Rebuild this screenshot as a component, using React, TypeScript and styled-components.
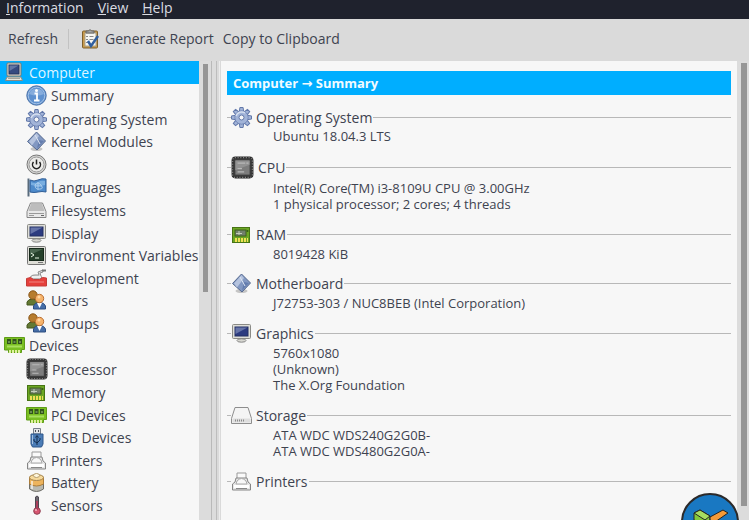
import React from "react";
import styled, { createGlobalStyle, css } from "styled-components";

const GlobalStyle = createGlobalStyle`
  * { box-sizing: border-box; }
  html, body { margin: 0; height: 100%; overflow: hidden; }
  body, button, a { font-family: "Open Sans", "DejaVu Sans", sans-serif; font-size: 14px; }
  body { background: #dadada; color: #3e4350; }
`;

const Window = styled.div`
  position: relative;
  display: flex;
  flex-direction: column;
  height: 100vh;
  overflow: hidden;
`;

const MenuBar = styled.nav`
  display: flex;
  align-items: center;
  gap: 14px;
  height: 19px;
  flex: none;
  padding: 0 6px 3px;
  background: #1f222d;
`;

const MenuButton = styled.button`
  border: 0;
  padding: 0;
  background: none;
  color: #dadce2;
  line-height: 16px;
  &::first-letter { text-decoration: underline; }
`;

const Toolbar = styled.div`
  display: flex;
  align-items: center;
  height: 41px;
  flex: none;
  padding: 0 8px 2px;
  background: #dadada;
`;

const ToolButton = styled.button`
  display: flex;
  align-items: center;
  gap: 4px;
  border: 0;
  padding: 0;
  margin-right: 9px;
  background: none;
  color: #3e4350;
  white-space: nowrap;
`;

const Divider = styled.span`
  width: 1px;
  height: 20px;
  margin: 0 12px 0 1px;
  background: #c2c2c2;
`;

const Panes = styled.div`
  display: flex;
  flex: 1;
  min-height: 0;
  padding-top: 1px;
`;

const Tree = styled.ul`
  flex: none;
  width: 199px;
  margin: 0;
  padding: 0;
  list-style: none;
  overflow: hidden;
  background: #f7f7f7;
`;

const TreeLink = styled.a<{ $height: number; $top?: boolean; $selected?: boolean }>`
  display: flex;
  align-items: center;
  gap: 4px;
  height: ${(p) => p.$height}px;
  padding-left: ${(p) => (p.$top ? 4 : 26)}px;
  padding-bottom: 1px;
  color: #3e4350;
  text-decoration: none;
  white-space: nowrap;
  ${(p) =>
    p.$selected &&
    css`
      background: #00aeff;
      color: #dff5ff;
    `}
`;

const Trough = styled.div<{ $edge?: boolean }>`
  flex: none;
  width: 12px;
  padding: ${(p) => (p.$edge ? "2px 2px 0 4px" : "3px 3px 0 4px")};
  background: #dcdcdc;
`;

const Thumb = styled.div<{ $share: number }>`
  height: ${(p) => p.$share}%;
  background: #969696;
`;

const Splitter = styled.div`
  flex: none;
  width: 9px;
  margin-right: 1px;
  border-left: 1px solid #b9b9b9;
  border-right: 1px solid #ececec;
  background: linear-gradient(90deg, #dcdcdc 4px, #bdbdbd 4px 5px, #dadada 5px);
`;

const Detail = styled.main`
  flex: 1;
  min-width: 0;
  padding: 10px 6px 0;
  background: #f7f7f7;
`;

const Heading = styled.h1`
  margin: 0 0 13px;
  padding-left: 6px;
  background: #00aeff;
  color: #f2fbff;
  font-size: 13px;
  font-weight: 700;
  line-height: 24px;
`;

const Section = styled.section`
  margin-bottom: 12px;
`;

const SectionTitle = styled.h2<{ $height: number }>`
  display: flex;
  align-items: center;
  gap: 4px;
  height: ${(p) => p.$height}px;
  margin: 0;
  padding-bottom: 2px;
  font-size: 14px;
  font-weight: 400;
  white-space: nowrap;
  &::before {
    content: "";
    width: 4px;
    height: 1px;
    margin-right: -4px;
    background: #b8b8b8;
  }
  &::after {
    content: "";
    flex: 1;
    height: 1px;
    margin-left: -3px;
    background: #b8b8b8;
  }
`;

const Line = styled.p`
  margin: 0;
  padding-left: 46px;
  font-size: 13px;
  line-height: 16px;
  color: #3e4350;
`;

const Badge = styled.div`
  position: absolute;
  right: 10px;
  bottom: -31px;
`;

const Icon = styled.svg`
  display: block;
  flex: none;
  overflow: visible;
`;

type IconName =
  | "computer" | "info" | "gear" | "diamond" | "power" | "flag" | "drive" | "disk" | "display"
  | "terminal" | "knife" | "users" | "card" | "chip" | "memory" | "usb" | "printer"
  | "battery" | "sensor";

const gearTeeth = [0, 45, 90, 135, 180, 225, 270, 315];

const drawings: Record<IconName, React.ReactNode> = {
  computer: (
    <>
      <rect x="3" y="1" width="14" height="13" rx="1" fill="#e4e3d8" stroke="#77776f" />
      <rect x="5" y="3" width="10" height="9" fill="#354a80" stroke="#26335a" />
      <path d="M5.500 3.500h9L5.500 9z" fill="#6377a6" />
      <path d="M3 15h14l1.500 3.500h-17z" fill="#e6e5dc" stroke="#8b8b82" />
      <path d="M4 16.500h12" stroke="#a5a59c" />
    </>
  ),
  info: (
    <>
      <circle cx="10.500" cy="10.500" r="9.700" fill="#5f91cf" stroke="#4a72a8" />
      <circle cx="10.500" cy="10.500" r="8.300" fill="none" stroke="#a5c2e6" />
      <path d="M3 9a8 8 0 0 1 15 0q-7 3-15 0" fill="#86acdc" />
      <circle cx="10.500" cy="5.500" r="1.500" fill="#fff" />
      <path d="M8.500 8.500h2.500v6.500M8 15.500h5.500" fill="none" stroke="#fff" strokeWidth="1.800" />
    </>
  ),
  gear: (
    <>
      {gearTeeth.map((a) => (
        <path key={a} d="M8.300 5l.6-4.500h3.200l.6 4.500z" fill="#a2b4d8" stroke="#6379aa" transform={`rotate(${a} 10.500 10.500)`} />
      ))}
      <circle cx="10.500" cy="10.500" r="6.700" fill="#a2b4d8" stroke="#6379aa" strokeWidth=".7" />
      <path d="M5 9a6 6 0 0 1 9-3" fill="none" stroke="#d4deef" strokeWidth="1.500" />
      <circle cx="10.500" cy="10.500" r="2.500" fill="#f7f7f7" stroke="#6379aa" />
    </>
  ),
  diamond: (
    <>
      <ellipse cx="10.500" cy="18" rx="6" ry="2" fill="#c5c5c5" />
      <path d="M10.500 1L19.500 10 11 19 1.500 10.500z" fill="#8298c2" stroke="#55698f" />
      <path d="M10.500 2L13 5 6 14.500 3 10.500z" fill="#b5c3de" />
      <path d="M13 9l5 1-7 7.500z" fill="#647dae" />
      <path d="M9 4l5 9" stroke="#dbe4f2" />
    </>
  ),
  power: (
    <>
      <circle cx="10.500" cy="10.500" r="9.500" fill="#d6d6d4" stroke="#777" />
      <circle cx="10.500" cy="10.500" r="7.500" fill="#ececea" stroke="#999" />
      <path d="M7.500 8a4 4 0 1 0 6 0M10.500 5.500v5" fill="none" stroke="#222" strokeWidth="1.500" />
    </>
  ),
  flag: (
    <>
      <path d="M2.500 1.500v18" stroke="#596b7c" strokeWidth="2" />
      <path d="M4 3q4 2 8 0t8-1v13q-4-1-8 0t-8 0z" fill="#4e8bcb" stroke="#315f97" />
      <path d="M5 5q4 2 7 0t7-1v4q-6 2-14 0z" fill="#79aee0" />
      <path d="M9 8q3-4 6 0t-1 4q-5 1-5-4M12 5v8M9 9h7" fill="none" stroke="#a9cced" />
    </>
  ),
  drive: (
    <>
      <path d="M4.500 3h12l3.500 8.500v6H1v-6z" fill="#e8e8e8" stroke="#858585" />
      <path d="M5 4h11l2.500 7h-16z" fill="#bdbdbd" />
      <path d="M3 13.500h15M3 15.500h5" stroke="#999" />
      <path d="M15 15.500h3" stroke="#666" />
    </>
  ),
  disk: (
    <>
      <path d="M4 2.500h13l3.500 11v5H.5v-5z" fill="#f4f4f4" stroke="#8d8d8d" />
      <path d="M1.500 13.500h18v4h-18z" fill="#dedede" />
      <path d="M4 15.500h9" stroke="#8a8a8a" strokeWidth="2" strokeDasharray="1 1" />
    </>
  ),
  display: (
    <>
      <ellipse cx="10.500" cy="17.500" rx="4.500" ry="1.700" fill="#d7d7d1" stroke="#888" />
      <rect x="1.500" y="1.500" width="18" height="14" rx="1" fill="#deded8" stroke="#8a8a86" />
      <rect x="4" y="4" width="13" height="9" fill="#2c3b80" stroke="#222f62" />
      <path d="M4.500 4.500h12L4.500 11z" fill="#6674a8" />
    </>
  ),
  terminal: (
    <>
      <rect x="1.500" y="1.500" width="18" height="18" rx="1" fill="#deded7" stroke="#777" />
      <rect x="3.500" y="3.500" width="14" height="12" fill="#25402b" stroke="#17291b" />
      <path d="M4 4h13L4 10z" fill="#4a6650" />
      <path d="M5 8l3 2-3 2M9 13h4" fill="none" stroke="#e8f4e4" />
      <path d="M12 17.500h5" stroke="#777" />
    </>
  ),
  knife: (
    <>
      <path d="M4 11q0-4 5-4h4l-1-3 5-2v2l-3 1 2 6z" fill="#dedede" stroke="#8d8d8d" />
      <path d="M16 2.500h4" stroke="#777" strokeWidth="2" />
      <path d="M.5 10.500l4-1 3 2h6l3-2 4 .5v8H.5z" fill="#e5403c" stroke="#c53c38" />
      <path d="M3 14h15" stroke="#f18580" />
      <path d="M6 9h9" stroke="#fff" />
    </>
  ),
  users: (
    <>
      <path d="M1 15v-3q1-3 6-3 4 1 5 3v3z" fill="#637933" stroke="#44571f" />
      <circle cx="7" cy="5" r="4.200" fill="#b77c2d" stroke="#8a5719" />
      <path d="M7.500 19v-3q1-3.500 6-3.500t6 3.500v3z" fill="#456da7" stroke="#2d4e80" />
      <path d="M11 13l2.500 5 2.500-5z" fill="#fff" />
      <circle cx="13.500" cy="8.500" r="4.200" fill="#f5b36b" stroke="#bb7034" />
      <circle cx="13" cy="7" r="1.500" fill="#ffd7a3" />
    </>
  ),
  card: (
    <>
      <path d="M.5 2.500h20v12h-3v3h-13v-2.500h-4z" fill="#7abf22" stroke="#5f9d17" />
      <path d="M3 4h4v5H3zM8.500 4h4v5h-4zM14 4h4v5h-4z" fill="#31531c" />
      <path d="M4 7h2M9.500 7h2M15 7h2" stroke="#a5c888" />
      <path d="M3 11.500h15" stroke="#a8df5d" strokeWidth="2" />
      <path d="M5 16.500h12" stroke="#dff0a0" strokeWidth="3" strokeDasharray="2 1" />
    </>
  ),
  chip: (
    <>
      <rect x="1" y="1" width="19" height="19" rx="3" fill="#363636" stroke="#292929" />
      <rect x="1.500" y="1.500" width="18" height="18" rx="2" fill="none" stroke="#888" strokeDasharray="1 1.500" />
      <rect x="3.500" y="3.500" width="14" height="14" fill="#7c7c7c" stroke="#3b3b3b" />
      <path d="M4 4h13v4L4 13z" fill="#929292" />
      <path d="M6 6.500h7M14 6.500h2M6 11.500h4M6 14.500h6" stroke="#b8b8b8" />
    </>
  ),
  memory: (
    <>
      <rect x="1.500" y="3.500" width="17" height="15" fill="#6ca724" stroke="#477414" />
      <rect x="4" y="6" width="11" height="6" fill="#71806b" stroke="#3e5e1f" />
      <path d="M5 9.500h6M8 7v4" stroke="#c5cebc" />
      <circle cx="16.500" cy="7" r="1" fill="#365817" />
      <path d="M4 16h13" stroke="#f0df55" strokeWidth="4" strokeDasharray="2 1" />
    </>
  ),
  usb: (
    <>
      <path d="M7.500 1.500h7V7h-7z" fill="#e2e4e8" stroke="#777e89" />
      <path d="M9 4h1M12 4h1" stroke="#4b5059" strokeWidth="2" />
      <path d="M5 7h12v10l-1.500 3h-9L5 17z" fill="#4b7cb6" stroke="#2f568a" />
      <path d="M6.500 8v9" stroke="#a4c0e0" />
      <path d="M11 9v9M8 12v2l3 2 3-3v-2M9.500 10.500L11 8.500l1.500 2" fill="none" stroke="#152e4f" />
    </>
  ),
  printer: (
    <>
      <path d="M6 8V2h9v6z" fill="#fafafa" stroke="#999" />
      <path d="M5 7h11l1 4 2.500 2v6h-18v-6L4 11z" fill="#e6e6e6" stroke="#858585" />
      <path d="M6 10q4.500-5 9 0l1 3H5z" fill="#f8f8f8" stroke="#aaa" />
      <path d="M3 14h15v3H3z" fill="#fff" />
      <path d="M5 17.500h11" stroke="#888" />
    </>
  ),
  battery: (
    <>
      <path d="M3.500 6v11q7 5 14 0V6z" fill="#b9b9b0" stroke="#6e6e69" />
      <path d="M3.500 5v7q7 4 14 0V5q-7-4-14 0z" fill="#edb45d" stroke="#ab7c39" />
      <ellipse cx="10.500" cy="5.500" rx="7" ry="3" fill="#f6d99a" stroke="#a58550" />
      <ellipse cx="10.500" cy="3.500" rx="3" ry="2" fill="#fff6db" stroke="#b59c6c" />
      <path d="M6 9v8" stroke="#fff" strokeWidth="2" opacity=".6" />
    </>
  ),
  sensor: (
    <>
      <path d="M9.500 2q1.500-2 3 0v11h-3z" fill="#6e6971" stroke="#4d4a52" />
      <circle cx="11" cy="16" r="3.300" fill="#d75570" stroke="#8f3e50" />
      <path d="M11 6v9" stroke="#a9405c" strokeWidth="2" />
      <circle cx="10" cy="15" r="1" fill="#f5b9c4" />
    </>
  ),
};

function Glyph({ name, size = 22 }: { name: IconName; size?: number }) {
  return (
    <Icon width={size} height={size} viewBox="0 0 21 21" aria-hidden="true">
      {drawings[name]}
    </Icon>
  );
}

const tree: { label: string; icon: IconName; height: number; top?: boolean; selected?: boolean }[] = [
  { label: "Computer", icon: "computer", height: 23, top: true, selected: true },
  { label: "Summary", icon: "info", height: 24 },
  { label: "Operating System", icon: "gear", height: 23 },
  { label: "Kernel Modules", icon: "diamond", height: 22 },
  { label: "Boots", icon: "power", height: 23 },
  { label: "Languages", icon: "flag", height: 23 },
  { label: "Filesystems", icon: "drive", height: 23 },
  { label: "Display", icon: "display", height: 23 },
  { label: "Environment Variables", icon: "terminal", height: 22 },
  { label: "Development", icon: "knife", height: 23 },
  { label: "Users", icon: "users", height: 22 },
  { label: "Groups", icon: "users", height: 23 },
  { label: "Devices", icon: "card", height: 22, top: true },
  { label: "Processor", icon: "chip", height: 25 },
  { label: "Memory", icon: "memory", height: 22 },
  { label: "PCI Devices", icon: "card", height: 23 },
  { label: "USB Devices", icon: "usb", height: 22 },
  { label: "Printers", icon: "printer", height: 23 },
  { label: "Battery", icon: "battery", height: 22 },
  { label: "Sensors", icon: "sensor", height: 23 },
];

const sections: { title: string; icon: IconName; height: number; lines: string[] }[] = [
  { title: "Operating System", icon: "gear", height: 20, lines: ["Ubuntu 18.04.3 LTS"] },
  {
    title: "CPU",
    icon: "chip",
    height: 24,
    lines: ["Intel(R) Core(TM) i3-8109U CPU @ 3.00GHz", "1 physical processor; 2 cores; 4 threads"],
  },
  { title: "RAM", icon: "memory", height: 22, lines: ["8019428 KiB"] },
  { title: "Motherboard", icon: "diamond", height: 21, lines: ["J72753-303 / NUC8BEB (Intel Corporation)"] },
  { title: "Graphics", icon: "display", height: 22, lines: ["5760x1080", "(Unknown)", "The X.Org Foundation"] },
  { title: "Storage", icon: "disk", height: 22, lines: ["ATA WDC WDS240G2G0B-", "ATA WDC WDS480G2G0A-"] },
  { title: "Printers", icon: "printer", height: 22, lines: [] },
];

export default function App() {
  return (
    <Window>
      <GlobalStyle />
      <MenuBar aria-label="Main menu">
        <MenuButton>Information</MenuButton>
        <MenuButton>View</MenuButton>
        <MenuButton>Help</MenuButton>
      </MenuBar>
      <Toolbar>
        <ToolButton>Refresh</ToolButton>
        <Divider />
        <ToolButton>
          <Icon width="20" height="22" viewBox="0 0 20 22" aria-hidden="true">
            <rect x="1.500" y="3" width="15" height="17" rx="1" fill="#c89a4b" stroke="#7e602d" />
            <path d="M4 5h11v13H4z" fill="#f6f6f2" stroke="#aaa28d" />
            <path d="M5 5V3h2.500q1.500-3 3 0H13v2z" fill="#a9a9a6" stroke="#666" />
            <path d="M5 8.500h2M8.500 8.500h4M5 11.500h2M8.500 11.500h4M5 14.500h2" stroke="#888" />
            <path d="M7 13l3 5 7-10" fill="none" stroke="#315f9e" strokeWidth="2.500" />
          </Icon>
          Generate Report
        </ToolButton>
        <ToolButton>Copy to Clipboard</ToolButton>
      </Toolbar>
      <Panes>
        <Tree aria-label="Categories">
          {tree.map((row) => (
            <li key={row.label}>
              <TreeLink href="#" $height={row.height} $top={row.top} $selected={row.selected}>
                <Glyph name={row.icon} size={row.icon === "chip" ? 22 : 21} />
                {row.label}
              </TreeLink>
            </li>
          ))}
        </Tree>
        <Trough>
          <Thumb $share={50} />
        </Trough>
        <Splitter />
        <Detail>
          <Heading>Computer → Summary</Heading>
          {sections.map((s) => (
            <Section key={s.title}>
              <SectionTitle $height={s.height}>
                <Glyph name={s.icon} size={s.icon === "chip" ? 23 : 21} />
                {s.title}
              </SectionTitle>
              {s.lines.map((l) => (
                <Line key={l}>{l}</Line>
              ))}
            </Section>
          ))}
        </Detail>
        <Trough $edge>
          <Thumb $share={97} />
        </Trough>
      </Panes>
      <Badge>
        <Icon width="58" height="58" viewBox="0 0 58 58" aria-hidden="true">
          <circle cx="29" cy="29" r="28" fill="#1978c2" stroke="#2c2a2a" strokeWidth="2" />
          <path d="M13 20l6-3 10 6v8l-4 2-12-6z" fill="#83c83c" stroke="#242424" />
          <path d="M13 20l6-3 10 6-5 4z" fill="#a6dc5f" stroke="#242424" />
          <path d="M29 24l13-7 5 3-13 9-5-2z" fill="#f49a38" stroke="#242424" />
        </Icon>
      </Badge>
    </Window>
  );
}
